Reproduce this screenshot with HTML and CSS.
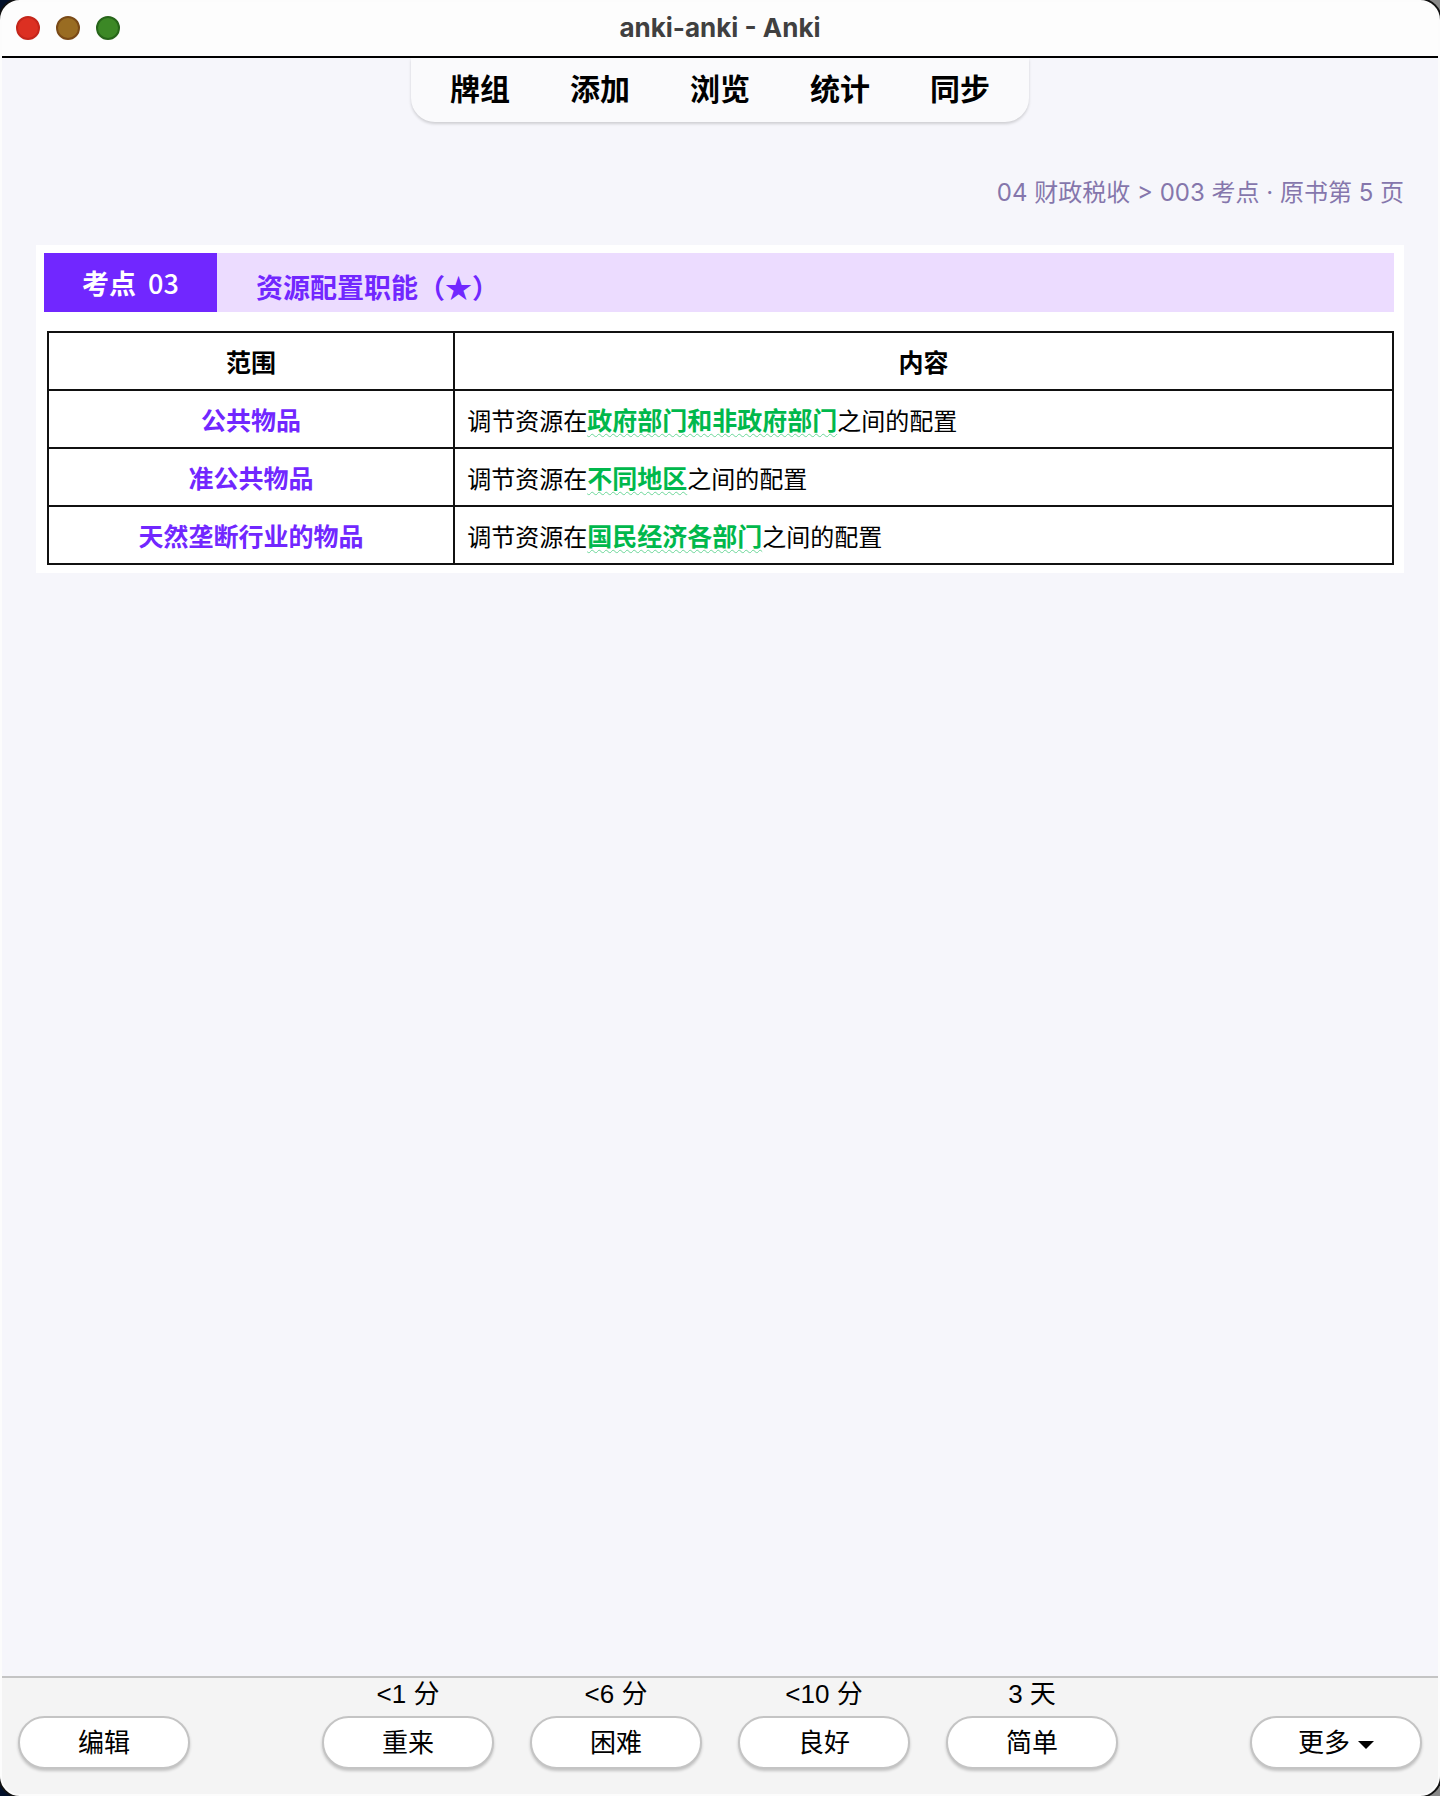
FILE: index.html
```
<!DOCTYPE html>
<html lang="zh-CN">
<head>
    <meta charset="UTF-8">
    <meta name="viewport" content="width=device-width, initial-scale=1.0">
    <title>anki-anki - Anki</title>
    <link rel="stylesheet" href="styles.css">
</head>
<body>
    <div class="window">
        <header class="titlebar">
            <div class="lights">
                <button class="light close" type="button" aria-label="关闭"></button>
                <button class="light minimize" type="button" aria-label="最小化"></button>
                <button class="light zoom" type="button" aria-label="缩放"></button>
            </div>
            <h1 class="title">anki-anki - Anki</h1>
        </header>

        <nav class="toolbar">
            <a href="#decks">牌组</a>
            <a href="#add">添加</a>
            <a href="#browse">浏览</a>
            <a href="#stats">统计</a>
            <a href="#sync">同步</a>
        </nav>

        <main class="review">
            <p class="source">04 财政税收 &gt; 003 考点 · 原书第 5 页</p>

            <section class="card">
                <div class="banner">
                    <span class="banner-tag">考点<span class="banner-number">03</span></span>
                    <h2 class="banner-title">资源配置职能（★）</h2>
                </div>
                <table class="points">
                    <thead>
                        <tr>
                            <th class="scope" scope="col">范围</th>
                            <th scope="col">内容</th>
                        </tr>
                    </thead>
                    <tbody>
                        <tr>
                            <th scope="row">公共物品</th>
                            <td>调节资源在<strong>政府部门和非政府部门</strong>之间的配置</td>
                        </tr>
                        <tr>
                            <th scope="row">准公共物品</th>
                            <td>调节资源在<strong>不同地区</strong>之间的配置</td>
                        </tr>
                        <tr>
                            <th scope="row">天然垄断行业的物品</th>
                            <td>调节资源在<strong>国民经济各部门</strong>之间的配置</td>
                        </tr>
                    </tbody>
                </table>
            </section>
        </main>

        <footer class="bottombar">
            <button class="btn" type="button">编辑</button>
            <div class="answers">
                <div class="answer">
                    <label for="again">&lt;1 分</label>
                    <button class="btn" type="button" id="again">重来</button>
                </div>
                <div class="answer">
                    <label for="hard">&lt;6 分</label>
                    <button class="btn" type="button" id="hard">困难</button>
                </div>
                <div class="answer">
                    <label for="good">&lt;10 分</label>
                    <button class="btn" type="button" id="good">良好</button>
                </div>
                <div class="answer">
                    <label for="easy">3 天</label>
                    <button class="btn" type="button" id="easy">简单</button>
                </div>
            </div>
            <button class="btn" type="button">更多
                <svg class="caret" viewBox="0 0 16 8" aria-hidden="true"><path d="M0 0h16L8 8z"/></svg>
            </button>
        </footer>
    </div>
</body>
</html>
```

FILE: styles.css
```
* {
    box-sizing: border-box;
}
html {
    background: linear-gradient(to right, #02102a 50%, #8a8a8a 50%);
}
body {
    margin: 0;
    font-family: "Liberation Sans", "Noto Sans CJK SC", sans-serif;
    color: #000;
}
.window {
    display: flex;
    flex-direction: column;
    min-height: 100vh;
    border: 2px solid #fcfcfc;
    border-radius: 20px;
    background-color: #f6f6fb;
    overflow: hidden;
    box-shadow: 0 0 0 2px #111;
}

/* title bar */
.titlebar {
    display: grid;
    grid-template-columns: 1fr auto 1fr;
    align-items: center;
    height: 56px;
    padding: 0 14px 2px;
    background-color: #fdfdfd;
    border-bottom: 2px solid #000;
}
.lights {
    display: flex;
    gap: 16px;
}
.light {
    width: 24px;
    height: 24px;
    padding: 0;
    border: 2px solid;
    border-radius: 50%;
}
.close {
    background-color: #dc3022;
    border-color: #c4261b;
}
.minimize {
    background-color: #996c22;
    border-color: #7a4a17;
}
.zoom {
    background-color: #3c8826;
    border-color: #27651a;
}
.title {
    margin: 0;
    font-family: Inter, sans-serif;
    font-size: 26px;
    line-height: 32px;
    font-weight: 700;
    color: #404040;
}

/* top links */
.toolbar {
    display: flex;
    align-self: center;
    gap: 60px;
    padding: 10px 39px 10px;
    background-color: #fafafc;
    border-radius: 0 0 24px 24px;
    box-shadow: 0 2px 3px rgba(0, 0, 0, 0.16);
}
.toolbar a {
    font-size: 30px;
    line-height: 44px;
    font-weight: 700;
    color: #000;
    text-decoration: none;
}

/* card */
.review {
    flex: 1;
    padding: 53px 34px;
}
.source {
    margin: 0 0 34px;
    font-family: Inter, "Noto Sans CJK SC", sans-serif;
    font-size: 24px;
    line-height: 36px;
    text-align: right;
    color: #8576ac;
}
.card {
    padding: 8px 10px 8px 8px;
    background-color: #fff;
    font-family: "Noto Sans CJK SC", sans-serif;
}
.banner {
    display: flex;
    align-items: stretch;
    height: 59px;
    margin-bottom: 19px;
    background-color: #ecdcff;
}
.banner-tag {
    display: flex;
    justify-content: center;
    gap: 12px;
    width: 173px;
    background-color: #7127ff;
    color: #fff;
    font-size: 27px;
    line-height: 60px;
    font-weight: 700;
}
.banner-number {
    font-weight: 500;
}
.banner-title {
    margin: 0;
    padding: 4px 0 0 39px;
    font-size: 27px;
    line-height: 60px;
    font-weight: 700;
    color: #7127ff;
}
.points {
    width: calc(100% - 3px);
    margin-left: 3px;
    border-collapse: collapse;
    table-layout: fixed;
}
.points th,
.points td {
    height: 58px;
    padding: 0 12px;
    border: 2px solid #111;
    line-height: 36px;
}
.points th {
    font-size: 25px;
    font-weight: 700;
}
.points td {
    font-size: 24px;
}
.points .scope {
    width: 30.2%;
}
.points tbody th {
    color: #7127ff;
}
.points strong {
    font-size: 25px;
    color: #00b84c;
    text-decoration: underline wavy #6bd698 1px;
    text-underline-offset: 3px;
}

/* answer buttons */
.bottombar {
    display: flex;
    justify-content: space-between;
    align-items: flex-end;
    padding: 0 16px 25px;
    background-color: #f4f4f4;
    border-top: 2px solid #c4c4c4;
}
.answers {
    display: flex;
    gap: 36px;
}
.answer {
    display: flex;
    flex-direction: column;
    align-items: center;
}
.answer label {
    font-size: 26px;
    line-height: 32px;
    margin-bottom: 6px;
}
.btn {
    display: flex;
    justify-content: center;
    align-items: center;
    gap: 8px;
    width: 172px;
    height: 53px;
    padding: 0;
    border: 2px solid #c4c4c4;
    border-radius: 27px;
    background-color: #fff;
    box-shadow: 0 2px 3px rgba(0, 0, 0, 0.2);
    font-family: inherit;
    font-size: 26px;
    line-height: 36px;
    color: #000;
}
.caret {
    width: 16px;
    height: 8px;
    margin-top: 4px;
}
```
